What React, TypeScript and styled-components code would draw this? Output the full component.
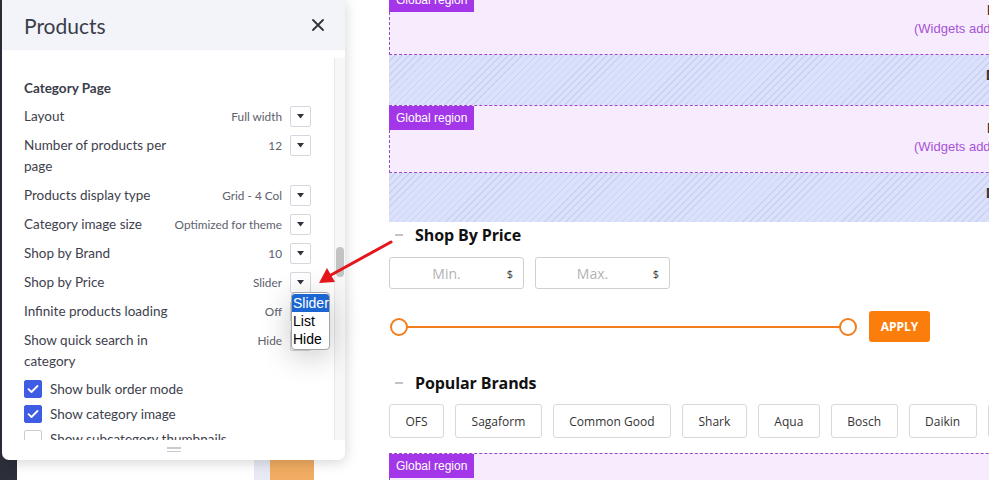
import React from "react";
import styled, { createGlobalStyle } from "styled-components";

const GlobalStyle = createGlobalStyle`
  html, body { margin: 0; padding: 0; width: 989px; height: 480px; overflow: hidden; background: #fff; }
  #root { width: 989px; height: 480px; }
  * { box-sizing: border-box; }
`;

const Page = styled.div`
  position: relative;
  display: flex;
  width: 989px;
  height: 480px;
  overflow: hidden;
  font-family: "Open Sans", sans-serif;
`;

const Column = styled.div<{ $w: number; $bg: string }>`
  flex: none;
  width: ${(p) => p.$w}px;
  height: 100%;
  background: ${(p) => p.$bg};
`;

const Content = styled.div`
  flex: none;
  width: 720px;
  margin-top: -13px;
  display: flex;
  flex-direction: column;
`;

const Region = styled.div`
  position: relative;
  flex: none;
  height: 68px;
  border: 1px dashed #9a4bc6;
  border-right: none;
  background: #f7ecfd;
  padding-top: 13px;
  font-family: "Liberation Sans", Arial, sans-serif;
`;

const RegionLabel = styled.span`
  position: absolute;
  top: 0;
  left: -1px;
  height: 24px;
  line-height: 24px;
  padding: 0 7px;
  background: #a236e8;
  color: #fff;
  font-size: 12px;
  font-family: "Liberation Sans", Arial, sans-serif;
`;

const EdgeTitle = styled.div`
  padding-left: 597px;
  line-height: 18px;
  font-size: 14px;
  font-weight: 700;
  color: #333;
  white-space: nowrap;
`;

const RegionNote = styled.div`
  padding-left: 524px;
  line-height: 20px;
  font-size: 13px;
  color: #a653d6;
  white-space: nowrap;
`;

const Hatched = styled.div<{ $h: number }>`
  flex: none;
  height: ${(p) => p.$h}px;
  padding-top: 11px;
  background: repeating-linear-gradient(135deg, #dbe1fb 0 4px, #cad2f3 4px 5px);
  font-family: "Liberation Sans", Arial, sans-serif;
`;

const SectionHead = styled.div<{ $mt: number }>`
  display: flex;
  align-items: center;
  height: 22px;
  margin-top: ${(p) => p.$mt}px;
`;

const Minus = styled.span`
  width: 8px;
  height: 2px;
  margin-left: 6px;
  margin-right: 12px;
  background: #c4c4c4;
`;

const SectionTitle = styled.span`
  font-size: 16px;
  font-weight: 700;
  color: #111;
  letter-spacing: -0.1px;
`;

const InputRow = styled.div`
  display: flex;
  gap: 11px;
  margin-top: 11px;
`;

const PriceInput = styled.div`
  position: relative;
  width: 135px;
  height: 32px;
  border: 1px solid #cfcfcf;
  border-radius: 3px;
  display: flex;
  align-items: center;
  justify-content: center;
  color: #b3b3b3;
  font-size: 14px;
  padding-right: 20px;
`;

const Dollar = styled.span`
  position: absolute;
  right: 10px;
  top: 8px;
  font-size: 11px;
  color: #333;
`;

const SliderRow = styled.div`
  display: flex;
  align-items: center;
  gap: 12px;
  margin-top: 22px;
`;

const Track = styled.div`
  position: relative;
  width: 467px;
  height: 18px;
  margin-left: 1px;
  display: flex;
  align-items: center;
  justify-content: space-between;
  &::before {
    content: "";
    position: absolute;
    left: 9px;
    right: 9px;
    top: 8px;
    height: 2px;
    background: #f27d1c;
  }
`;

const Knob = styled.span`
  position: relative;
  width: 18px;
  height: 18px;
  border-radius: 50%;
  border: 2px solid #f27d1c;
  background: #fff;
`;

const ApplyButton = styled.button`
  width: 61px;
  height: 31px;
  border: none;
  border-radius: 3px;
  background: #fb7e0d;
  color: #fff;
  font-family: "Open Sans", sans-serif;
  font-size: 12px;
  font-weight: 700;
  padding: 0;
`;

const BrandRow = styled.div`
  display: flex;
  gap: 11px;
  margin-top: 10px;
`;

const Brand = styled.div`
  flex: none;
  height: 34px;
  padding: 0 15.5px;
  border: 1px solid #d9d9d9;
  border-radius: 3px;
  display: flex;
  align-items: center;
  font-size: 12px;
  color: #333;
`;

const BottomRegion = styled(Region)`
  margin-top: 15px;
`;

/* ---------- panel ---------- */

const Panel = styled.div`
  position: absolute;
  left: 2px;
  top: 0;
  width: 343px;
  height: 460px;
  background: #fff;
  border-radius: 0 0 7px 7px;
  box-shadow: 0 2px 14px rgba(0, 0, 0, 0.18);
  display: flex;
  flex-direction: column;
  font-family: Lato, "Noto Sans", sans-serif;
`;

const PanelHeader = styled.div`
  flex: none;
  height: 50px;
  background: #f3f4f9;
  display: flex;
  align-items: center;
  justify-content: space-between;
  padding: 0 20px 0 22px;
`;

const PanelTitle = styled.span`
  font-size: 21px;
  color: #3a3d4a;
`;

const CloseButton = styled.span`
  display: flex;
  width: 14px;
  height: 14px;
  align-items: center;
  justify-content: center;
`;

const PanelBody = styled.div`
  flex: none;
  height: 390px;
  display: flex;
`;

const Scroller = styled.div`
  flex: 1;
  overflow: hidden;
  padding: 27px 23px 0 22px;
`;

const ScrollTrack = styled.div`
  flex: none;
  width: 11px;
  margin-top: 8px;
  border-left: 1px solid #e8e8e8;
  background: #f7f7f7;
  padding: 189px 0 0 1px;
`;

const ScrollThumb = styled.div`
  width: 8px;
  height: 30px;
  border-radius: 4px;
  background: #c3c3c3;
`;

const GroupTitle = styled.div`
  font-size: 13.5px;
  font-weight: 700;
  color: #3a3d4a;
  line-height: 22px;
  margin-bottom: 3px;
`;

const Row = styled.div`
  display: flex;
  align-items: flex-start;
  padding: 3.5px 0;
`;

const RowLabel = styled.div`
  flex: 1;
  max-width: 150px;
  font-size: 13.5px;
  line-height: 21.5px;
  color: #3e414d;
`;

const RowValue = styled.div`
  margin-left: auto;
  font-size: 11.8px;
  line-height: 22px;
  color: #5e616c;
  white-space: nowrap;
`;

const SelectBox = styled.span`
  flex: none;
  width: 21px;
  height: 21px;
  margin: 0.5px 0 0 8px;
  border: 1px solid #d5d7de;
  border-radius: 2px;
  background: #fff;
  display: flex;
  align-items: center;
  justify-content: center;
`;

const CheckRow = styled.div`
  display: flex;
  align-items: center;
  height: 25px;
  gap: 8px;
`;

const CheckBox = styled.span<{ $on: boolean }>`
  flex: none;
  width: 18px;
  height: 18px;
  border-radius: 2px;
  border: 1px solid ${(p) => (p.$on ? "#3f5de2" : "#c9ccd4")};
  background: ${(p) => (p.$on ? "#3f5de2" : "#fff")};
  display: flex;
  align-items: center;
  justify-content: center;
`;

const CheckLabel = styled.span`
  font-size: 13.5px;
  color: #3e414d;
`;

const PanelFooter = styled.div`
  flex: 1;
  display: flex;
  flex-direction: column;
  align-items: center;
  padding-top: 7px;
  gap: 2px;
`;

const HandleLine = styled.span`
  width: 14px;
  height: 1.5px;
  background: #c9cbd3;
`;

const Popup = styled.div`
  position: absolute;
  left: 289px;
  top: 292px;
  width: 39px;
  padding: 1px 0;
  background: #fff;
  border: 1px solid #a3a3a3;
  border-radius: 4px;
  box-shadow: 0 6px 30px rgba(0, 0, 0, 0.22);
  font-family: "Liberation Sans", Arial, sans-serif;
  font-size: 14px;
  line-height: 18px;
  color: #000;
`;

const PopupOption = styled.div<{ $sel?: boolean }>`
  padding-left: 1px;
  background: ${(p) => (p.$sel ? "#1b66d3" : "transparent")};
  color: ${(p) => (p.$sel ? "#fff" : "#000")};
  border-radius: ${(p) => (p.$sel ? "3px 3px 0 0" : "0")};
`;

const Overlay = styled.svg`
  position: absolute;
  left: 0;
  top: 0;
  pointer-events: none;
`;

const Caret = () => (
  <svg width="7" height="5" viewBox="0 0 7 5">
    <polygon points="0,0 7,0 3.5,4.5" fill="#2f323c" />
  </svg>
);

const Check = () => (
  <svg width="12" height="10" viewBox="0 0 12 10">
    <path d="M1.5 5.2 L4.5 8 L10.5 2" fill="none" stroke="#fff" strokeWidth="1.8" strokeLinecap="round" strokeLinejoin="round" />
  </svg>
);

const settings: { label: string; value: string }[] = [
  { label: "Layout", value: "Full width" },
  { label: "Number of products per page", value: "12" },
  { label: "Products display type", value: "Grid - 4 Col" },
  { label: "Category image size", value: "Optimized for theme" },
  { label: "Shop by Brand", value: "10" },
  { label: "Shop by Price", value: "Slider" },
  { label: "Infinite products loading", value: "Off" },
  { label: "Show quick search in category", value: "Hide" },
];

const checks = [
  { label: "Show bulk order mode", on: true },
  { label: "Show category image", on: true },
  { label: "Show subcategory thumbnails", on: false },
];

const brands = ["OFS", "Sagaform", "Common Good", "Shark", "Aqua", "Bosch", "Daikin", "Electrolux"];

export default function App() {
  return (
    <>
      <GlobalStyle />
      <Page>
        <Column $w={17} $bg="#2c2f3a" />
        <Column $w={237} $bg="#ffffff" />
        <Column $w={16} $bg="#e7e9f3" />
        <Column $w={44} $bg="#f0ac62" />
        <Column $w={75} $bg="#ffffff" />
        <Content>
          <Region>
            <RegionLabel>Global region</RegionLabel>
            <EdgeTitle>Drop</EdgeTitle>
            <RegionNote>(Widgets added here will appear on all pages)</RegionNote>
          </Region>
          <Hatched $h={50}>
            <EdgeTitle>Drop</EdgeTitle>
          </Hatched>
          <Region>
            <RegionLabel>Global region</RegionLabel>
            <EdgeTitle>Drop</EdgeTitle>
            <RegionNote>(Widgets added here will appear on all pages)</RegionNote>
          </Region>
          <Hatched $h={49}>
            <EdgeTitle>Drop</EdgeTitle>
          </Hatched>

          <SectionHead $mt={2}>
            <Minus />
            <SectionTitle>Shop By Price</SectionTitle>
          </SectionHead>
          <InputRow>
            <PriceInput>
              Min.
              <Dollar>$</Dollar>
            </PriceInput>
            <PriceInput>
              Max.
              <Dollar>$</Dollar>
            </PriceInput>
          </InputRow>
          <SliderRow>
            <Track>
              <Knob />
              <Knob />
            </Track>
            <ApplyButton>APPLY</ApplyButton>
          </SliderRow>

          <SectionHead $mt={30}>
            <Minus />
            <SectionTitle>Popular Brands</SectionTitle>
          </SectionHead>
          <BrandRow>
            {brands.map((b) => (
              <Brand key={b}>{b}</Brand>
            ))}
          </BrandRow>

          <BottomRegion>
            <RegionLabel>Global region</RegionLabel>
          </BottomRegion>
        </Content>

        <Panel>
          <PanelHeader>
            <PanelTitle>Products</PanelTitle>
            <CloseButton>
              <svg width="12" height="12" viewBox="0 0 12 12">
                <path d="M1 1 L11 11 M11 1 L1 11" stroke="#2f323c" strokeWidth="1.8" strokeLinecap="round" />
              </svg>
            </CloseButton>
          </PanelHeader>
          <PanelBody>
            <Scroller>
              <GroupTitle>Category Page</GroupTitle>
              {settings.map((s) => (
                <Row key={s.label}>
                  <RowLabel>{s.label}</RowLabel>
                  <RowValue>{s.value}</RowValue>
                  <SelectBox>
                    <Caret />
                  </SelectBox>
                </Row>
              ))}
              {checks.map((c) => (
                <CheckRow key={c.label}>
                  <CheckBox $on={c.on}>{c.on && <Check />}</CheckBox>
                  <CheckLabel>{c.label}</CheckLabel>
                </CheckRow>
              ))}
            </Scroller>
            <ScrollTrack>
              <ScrollThumb />
            </ScrollTrack>
          </PanelBody>
          <PanelFooter>
            <HandleLine />
            <HandleLine />
          </PanelFooter>
          <Popup>
            <PopupOption $sel>Slider</PopupOption>
            <PopupOption>List</PopupOption>
            <PopupOption>Hide</PopupOption>
          </Popup>
        </Panel>

        <Overlay width="989" height="480" viewBox="0 0 989 480">
          <line x1="391" y1="242" x2="331" y2="275" stroke="#e3161b" strokeWidth="3" strokeLinecap="round" />
          <polygon points="319,283 327,268 335,282" fill="#e3161b" />
        </Overlay>
      </Page>
    </>
  );
}
